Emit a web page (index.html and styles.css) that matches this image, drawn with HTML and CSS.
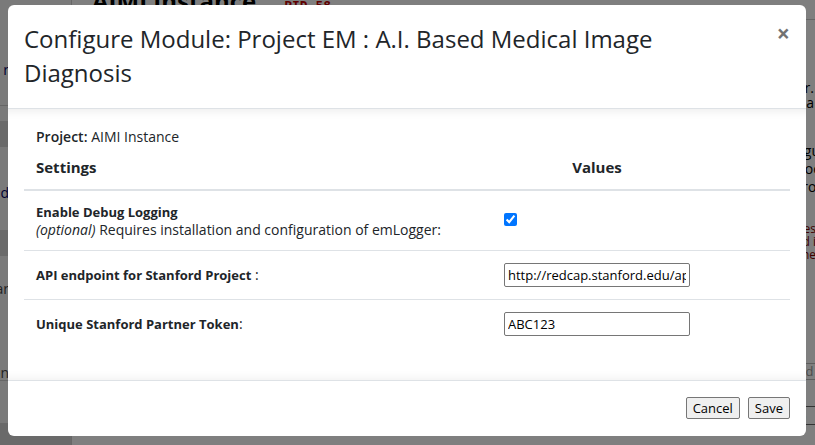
FILE: index.html
```html
<!DOCTYPE html>
<html>
<head>
<meta charset="utf-8">
<link rel="stylesheet" href="styles.css">
</head>
<body>
<div class="page">
  <aside class="sidebar">
    <div class="side-row s1">r</div>
    <div class="side-row s2"></div>
    <div class="side-row s3">d</div>
    <div class="side-row s4"></div>
    <div class="side-row s5">ar</div>
    <div class="side-row s6">on</div>
    <div class="side-row s7"></div>
  </aside>
  <main class="content">
    <div class="page-title"><span class="pt-name">AIMI Instance</span><span class="pt-pid">PID 58</span></div>
    <div class="page-text">
      <p class="pt1">by the administrator.<br>to request it for a</p>
      <p class="pt2">you must configu<br>settings in the doc<br>for the current proj</p>
      <p class="pt3">all settings mes<br>are required and i<br>before saving one</p>
      <div class="pt-input">Record id</div>
      <div class="pt-btn">Go</div>
    </div>
  </main>
</div>
<div class="backdrop"></div>
<div class="modal">
  <div class="modal-header">
    <h4 class="modal-title">Configure Module: Project EM : A.I. Based Medical Image Diagnosis</h4>
    <span class="close">&times;</span>
  </div>
  <div class="modal-body">
    <div class="project"><b>Project:</b> AIMI Instance</div>
    <div class="settings">
      <div class="row head">
        <div class="cell">Settings</div>
        <div class="cell val-head">Values</div>
      </div>
      <div class="row first">
        <div class="cell label"><b>Enable Debug Logging</b><br><i>(optional)</i> Requires installation and configuration of emLogger:</div>
        <div class="cell top"><input type="checkbox" class="chk" checked></div>
      </div>
      <div class="row">
        <div class="cell label"><b>API endpoint for Stanford Project</b> :</div>
        <div class="cell"><input type="text" class="txt" value="http://redcap.stanford.edu/api/"></div>
      </div>
      <div class="row">
        <div class="cell label"><b>Unique Stanford Partner Token</b>:</div>
        <div class="cell"><input type="text" class="txt" value="ABC123"></div>
      </div>
    </div>
  </div>
  <div class="modal-footer">
    <button class="btn">Cancel</button>
    <button class="btn">Save</button>
  </div>
</div>
</body>
</html>
```
FILE: styles.css
```css
* { box-sizing: border-box; }
html, body { margin: 0; padding: 0; }
body {
  width: 815px; height: 445px; overflow: hidden;
  font-family: "Open Sans", "Liberation Sans", sans-serif;
  color: #212529;
  background: #fff;
  position: relative;
}
.page { display: flex; height: 445px; }
.sidebar {
  width: 72px; flex: none;
  background: #f4f4f4;
  border-right: 1px solid #cfcfcf;
  display: flex; flex-direction: column;
  font-size: 14px; color: #000066;
}
.side-row { display: flex; align-items: center; justify-content: flex-end; padding-right: 62px; flex: none; }
.s1 { height: 106px; padding-top: 34px; border-bottom: 1px solid #ccc; }
.s2 { border-bottom: 26px solid #d4d4d4; height: 41px; }
.s3 { height: 83px; padding-top: 8px; }
.s4 { height: 26px; background: #d4d4d4; }
.s5 { height: 64px; color: #444; }
.s6 { height: 61px; color: #444; padding-top: 45px; border-bottom: 1px solid #ccc; }
.s7 { flex: 1; background: #d4d4d4; margin-top: 42px; }
.content { flex: 1; padding-left: 20px; position: relative; }
.page-title { margin-top: -16px; display: flex; align-items: baseline; gap: 28px; border-bottom: 1px solid #ccc; padding-bottom: 2px; }
.pt-name { font-size: 24px; font-weight: 700; color: #000; }
.pt-pid { font-family: "DejaVu Sans Mono", monospace; font-size: 13px; color: #c00000; font-weight: 700; }
.page-text { position: absolute; left: 540px; top: 80px; width: 205px; font-size: 14px; color: #000; white-space: nowrap; text-align: right; }
.page-text p { margin: 0; }
.pt1 { line-height: 15px; width: 202px; }
.pt2 { margin-top: 32px !important; line-height: 18px; width: 208px; }
.pt3 { margin-top: 26px !important; color: #800000; font-size: 12px; line-height: 13px; width: 204px; }
.pt-input { margin-top: 102px; margin-left: 20px; border: 1px solid #bbb; width: 200px; height: 17px; color: #999; font-size: 13px; line-height: 15px; padding-right: 3px; }
.pt-btn { margin-top: 26px; margin-left: 176px; border: 1px solid #666; width: 40px; height: 19px; font-size: 13px; text-align: left; }

.backdrop { position: absolute; inset: 0; background: rgba(0,0,0,0.5); }

.modal {
  position: absolute; left: 8px; top: 5px; width: 798px; height: 431px;
  background: #fff; border-radius: 6px;
  display: flex; flex-direction: column;
  overflow: hidden;
}
.modal-header {
  display: flex; align-items: flex-start; justify-content: space-between;
  padding: 17px 16px 18px 16px;
  border-bottom: 1px solid #dee2e6;
  flex: none;
}
.modal-title { margin: 0; font-size: 24px; font-weight: 400; line-height: 34px; color: #212529; width: 680px; }
.close { font-size: 23px; font-weight: 700; color: #000; opacity: .55; line-height: 1; margin: 0; }
.modal-body {
  flex: 1; padding: 19px 16px 0 16px;
  box-shadow: inset 0 12px 10px -10px rgba(0,0,0,0.08), inset 0 -12px 10px -10px rgba(0,0,0,0.06);
}
.project { font-size: 14px; padding-left: 12px; line-height: 18px; }
.project b { font-weight: 600; }
.settings { margin-top: 6px; }
.row { display: grid; grid-template-columns: 468px 298px; border-top: 1px solid #dee2e6; }
.row.head { border-top: none; border-bottom: 2px solid #dee2e6; font-weight: 700; }
.row.first { border-top: none; }
.row.head .cell { padding: 5px 12px 12px; line-height: 20px; font-size: 15px; display: block; }
.val-head { text-align: center; padding-right: 100px !important; }
.cell { padding: 12px 12px; font-size: 14px; line-height: 18px; display: flex; align-items: center; }
.cell.label { display: block; align-self: center; padding: 0 12px; }
.row.first .cell { padding-bottom: 11px; }
.row.first .cell.label { padding: 12px 12px 11px; }
.label b { font-weight: 700; font-size: 13px; }
.cell.top { align-items: flex-start; }
.chk { margin: 10px 0 0 0; width: 13px; height: 13px; }
.txt {
  width: 186px; height: 24px; margin: 0;
  border: 1px solid #767676; border-radius: 2px;
  font-family: "Open Sans", sans-serif; font-size: 13px; color: #000;
  padding: 1px 3px;
}
.modal-footer {
  flex: none; height: 56px;
  border-top: 1px solid #dee2e6;
  display: flex; align-items: center; justify-content: flex-end;
  gap: 8px; padding: 0 16px 2px;
}
.btn {
  font-family: "Open Sans", sans-serif; font-size: 13px; color: #000;
  background: #efefef; border: 1px solid #767676; border-radius: 2px;
  height: 22px; padding: 0 6px; margin: 0;
}
```
